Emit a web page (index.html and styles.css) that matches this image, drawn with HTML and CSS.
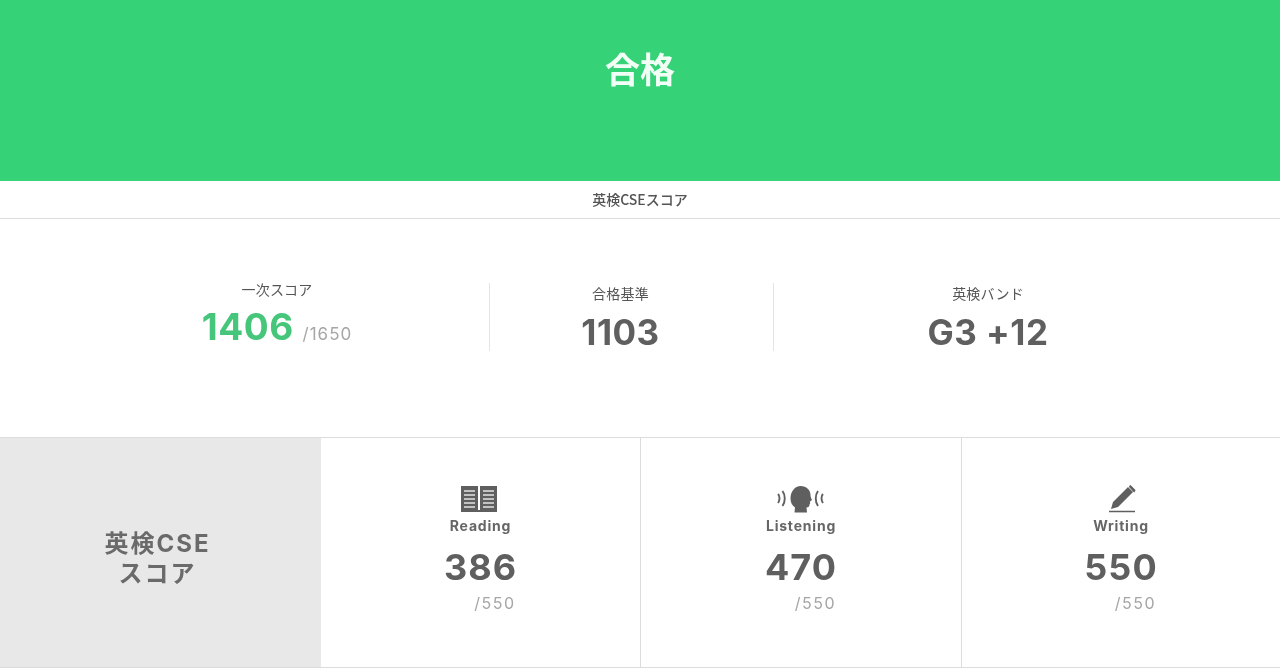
FILE: index.html
```html
<!DOCTYPE html>
<html lang="ja">
<head>
<meta charset="utf-8">
<title>英検CSEスコア</title>
<link rel="stylesheet" href="styles.css">
</head>
<body>
<header class="result"><h1 class="result-title">合格</h1></header>
<div class="subhead"><span class="subhead-text">英検CSEスコア</span></div>
<section class="stats">
  <div class="stat stat-first">
    <div class="stat-label">一次スコア</div>
    <div class="stat-value"><span class="green">1406</span> <span class="stat-max">/1650</span></div>
  </div>
  <div class="stat stat-second">
    <div class="stat-label">合格基準</div>
    <div class="stat-value">1103</div>
  </div>
  <div class="stat stat-third">
    <div class="stat-label">英検バンド</div>
    <div class="stat-value">G3 +12</div>
  </div>
</section>
<section class="skills">
  <div class="skills-head"><span class="skills-head-text">英検CSE<br>スコア</span></div>
  <div class="skill">
    <div class="skill-inner">
      <svg class="icon icon-book" viewBox="0 0 38 28" width="38" height="28" aria-hidden="true">
        <path fill="#5f5f5f" d="M1 1h17v25H1zM20 1h17v25H20z"/>
        <path stroke="#e4e4e4" stroke-width="1.5" d="M4 6h11M4 10h11M4 14h11M4 18h11M4 22h11M23 6h11M23 10h11M23 14h11M23 18h11M23 22h11"/>
        <path fill="#5f5f5f" d="M1 25h36v2H1z"/>
      </svg>
      <div class="skill-name">Reading</div>
      <div class="skill-score">386</div>
      <div class="skill-max">/550</div>
    </div>
  </div>
  <div class="skill">
    <div class="skill-inner">
      <svg class="icon" viewBox="0 0 50 28" width="50" height="28" aria-hidden="true">
        <path fill="#5f5f5f" d="M24.500 1c6 0 10 4 10 9 0 2 1 4 1.500 5l-2 1.500c0 1 .5 2-.5 3 0 2-1 3-3 3l.5 5H18.500l.5-5c-3-2-4.500-5-4.500-9 0-7 4.500-12.500 10-12.500z"/>
        <path fill="none" stroke="#5f5f5f" stroke-width="1.900" d="M2 9c2 2 2 6 0 9M6.500 6c3 4 3 11 0 15M42 6c-3 4-3 11 0 15M47 9c-2 2-2 6 0 9"/>
      </svg>
      <div class="skill-name">Listening</div>
      <div class="skill-score">470</div>
      <div class="skill-max">/550</div>
    </div>
  </div>
  <div class="skill skill-last">
    <div class="skill-inner">
      <svg class="icon icon-pen" viewBox="0 0 28 28" width="28" height="28" aria-hidden="true">
        <path fill="#5f5f5f" d="M20 2l5 5-15 15-7 2 2-7zM21.500 .5l1-.5 5 5-.5 1.500-1 1-5-5.500z"/>
        <path stroke="#5f5f5f" stroke-width="1.500" d="M1 26.500h26"/>
      </svg>
      <div class="skill-name">Writing</div>
      <div class="skill-score">550</div>
      <div class="skill-max">/550</div>
    </div>
  </div>
</section>
</body>
</html>
```
FILE: styles.css
```css
* { box-sizing: border-box; }
html, body { margin: 0; height: 670px; overflow: hidden; }
body {
  background: #fff;
  color: #5f5f5f;
  font-family: Inter, "Noto Sans CJK JP", sans-serif;
}
.result {
  height: 181px;
  background: #36d278;
  display: flex;
  justify-content: center;
  padding-top: 46px;
}
.result-title {
  margin: 0;
  color: #f2fff7;
  font-size: 35px;
  line-height: 44px;
  font-weight: 700;
  font-family: "Noto Sans CJK JP", sans-serif;
  filter: blur(.5px);
}
.subhead {
  height: 38px;
  border-bottom: 1px solid #dcdcdc;
  text-align: center;
  font-size: 14px;
  line-height: 36px;
  font-weight: 500;
  color: #555;
  font-family: "Noto Sans CJK JP", sans-serif;
}
.subhead-text { display: inline-block; filter: blur(.4px); }
.stats {
  height: 219px;
  border-bottom: 1px solid #dcdcdc;
  display: grid;
  grid-template-columns: 490px 284px 506px;
  padding-top: 64px;
}
.stat {
  height: 68px;
  text-align: center;
  border-right: 1px solid #e4e4e4;
}
.stat-first { padding-left: 65px; }
.stat-second { padding-right: 22px; }
.stat-third { padding-right: 78px; border-right: 0; }
.stat-label {
  font-size: 14px;
  line-height: 18px;
  letter-spacing: .2px;
  margin-top: 1px;
  color: #555;
  font-family: "Noto Sans CJK JP", sans-serif;
  filter: blur(.4px);
}
.stat-first .stat-label { margin-top: -3px; }
.stat-value {
  font-size: 35px;
  line-height: 42px;
  font-weight: 700;
  letter-spacing: .5px;
  color: #5f5f5f;
  margin-top: 9px;
  filter: blur(.5px);
}
.stat-first .stat-value { margin-top: 8px; }
.green { color: #45c67a; font-size: 37px; }
.stat-max {
  font-size: 17px;
  font-weight: 400;
  letter-spacing: 1px;
  color: #a6a6a6;
}
.skills {
  height: 230px;
  border-bottom: 1px solid #dcdcdc;
  display: grid;
  grid-template-columns: 321px 320px 321px 318px;
}
.skills-head {
  background: #e8e8e8;
  display: flex;
  align-items: center;
  justify-content: center;
  text-align: center;
  font-size: 24px;
  line-height: 30px;
  font-weight: 700;
  letter-spacing: 2px;
  color: #6a6a6a;
  padding: 12px 6px 0 0;
}
.skills-head-text { filter: blur(.5px); }
.skill {
  border-right: 1px solid #dcdcdc;
  display: flex;
  justify-content: center;
  padding-top: 47px;
}
.skill-last { border-right: 0; }
.skill-inner {
  width: 72px;
  display: flex;
  flex-direction: column;
  align-items: center;
  filter: blur(.5px);
}
.icon { display: block; height: 28px; }
.icon-book { margin-right: 3px; }
.icon-pen { margin-left: 2px; }
.skill-name {
  font-size: 14px;
  line-height: 17px;
  font-weight: 700;
  letter-spacing: .8px;
  margin-top: 4px;
  color: #666;
}
.skill-score {
  font-size: 36px;
  line-height: 42px;
  font-weight: 700;
  letter-spacing: 1px;
  margin-top: 12px;
}
.skill-max {
  align-self: flex-end;
  font-size: 16px;
  line-height: 20px;
  letter-spacing: 1.5px;
  color: #a6a6a6;
  margin-top: 5px;
  margin-right: 1px;
}
```
